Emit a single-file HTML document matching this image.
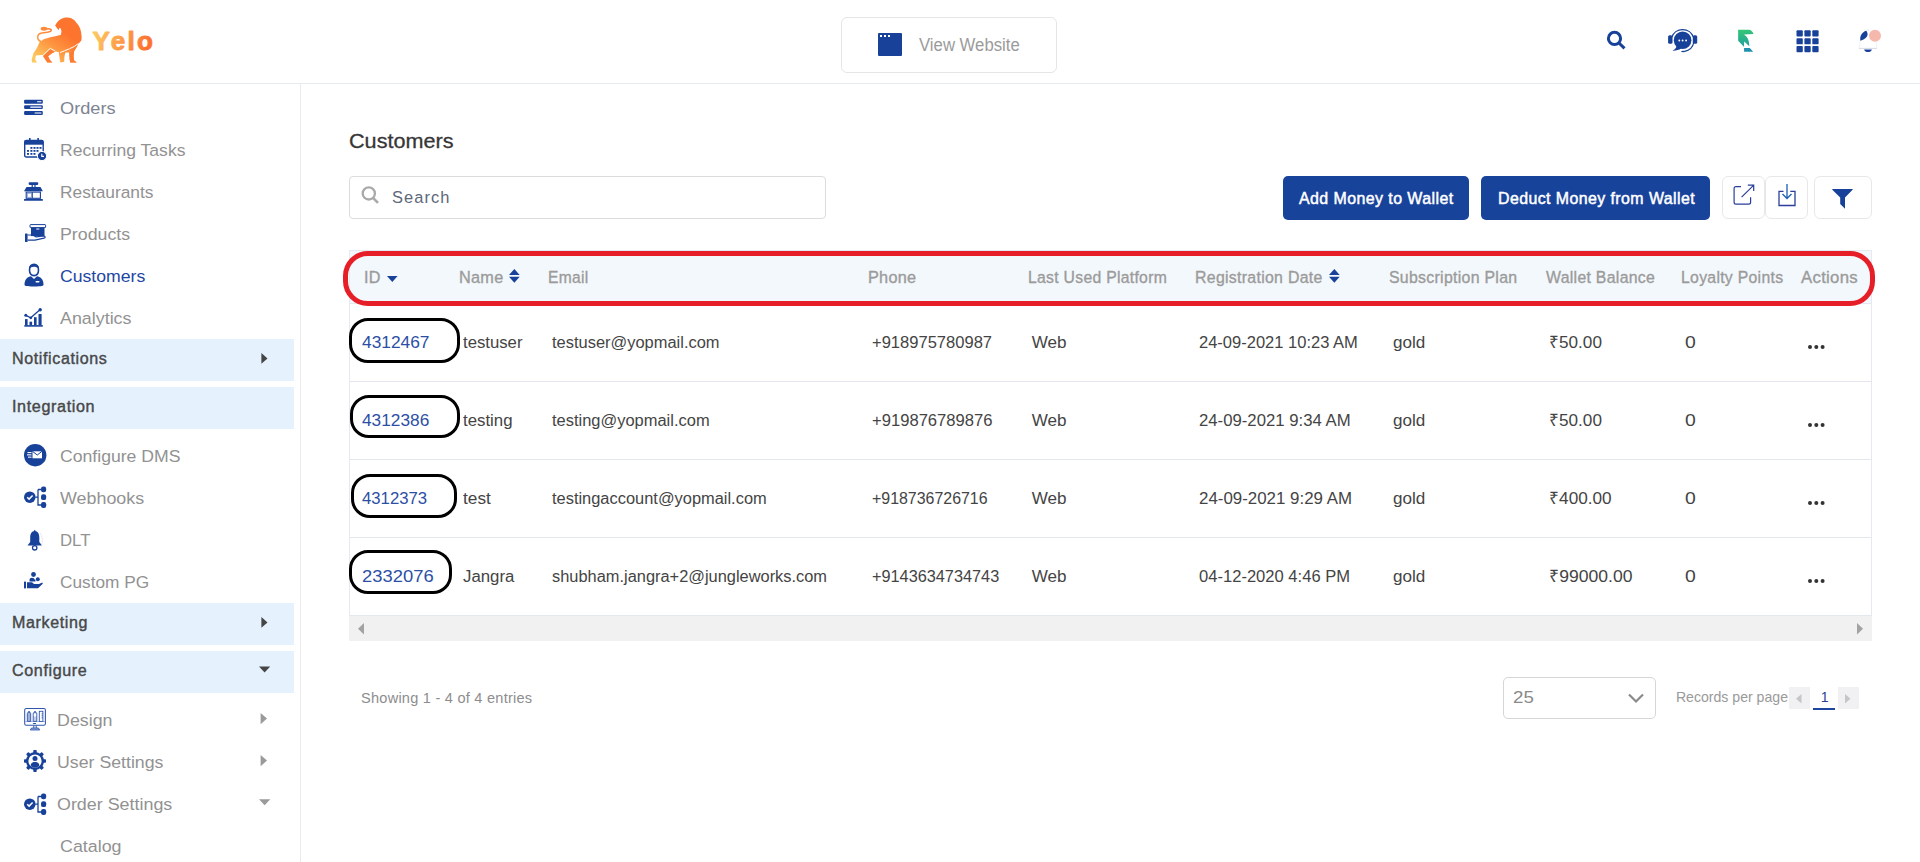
<!DOCTYPE html>
<html><head><meta charset="utf-8"><title>Customers</title><style>
*{box-sizing:border-box;margin:0;padding:0}
html,body{width:1920px;height:862px;overflow:hidden;background:#fff;font-family:"Liberation Sans",sans-serif}
body{position:relative}
.a{position:absolute;white-space:nowrap;line-height:1}
.b{position:absolute}
svg{position:absolute;overflow:visible}
</style></head><body>
<div class="b" style="left:0;top:83px;width:1920px;height:1px;background:#e7eaf2"></div>
<div class="b" style="left:300px;top:84px;width:1px;height:778px;background:#ebebeb"></div>
<svg style="left:0;top:0" width="1" height="1"><defs>
<linearGradient id="lg1" x1="0" y1="1" x2="0.6" y2="0.2"><stop offset="0" stop-color="#fdc15c"/><stop offset="1" stop-color="#fd7a2e"/></linearGradient>
<linearGradient id="lg2" x1="0" y1="0" x2="1" y2="0.2"><stop offset="0.1" stop-color="#fdc65f"/><stop offset="1" stop-color="#fd7130"/></linearGradient>
<linearGradient id="lg3" x1="0" y1="0" x2="0.1" y2="1"><stop offset="0" stop-color="#34c972"/><stop offset="1" stop-color="#22a0a0"/></linearGradient>
</defs></svg><svg style="left:28px;top:14px" width="60" height="52" viewBox="0 0 995 862">
<defs><linearGradient id="lgl" gradientUnits="userSpaceOnUse" x1="250" y1="800" x2="600" y2="300"><stop offset="0" stop-color="#fdc85e"/><stop offset="0.55" stop-color="#fd9440"/><stop offset="1" stop-color="#fd742e"/></linearGradient></defs>
<path fill="url(#lgl)" d="M450 190 C470 150 500 110 540 85 C590 55 660 45 720 70 L770 105 L800 140 L840 190 L865 240 L880 300 L890 380 L885 440 L860 470 L835 495 L800 560 L765 615 L755 700 L765 770 L810 805 L700 805 L690 740 L680 640 L620 640 L605 700 L600 790 L535 805 L520 700 L510 630 L460 620 L390 650 L330 700 L360 760 L405 805 L320 805 L255 705 L240 680 L130 690 L120 760 L150 805 L70 805 L60 760 L90 650 L150 560 L190 470 L260 420 L370 385 L470 365 L545 345 L555 290 L545 240 L520 230 L505 270 L480 230 Z"/>
<path fill="none" stroke="url(#lgl)" stroke-width="26" stroke-linecap="round" d="M215 455 C140 430 140 330 230 315 C300 300 380 305 385 270 C390 245 340 240 310 250"/>
<ellipse cx="265" cy="245" rx="55" ry="32" fill="#fd8a3c"/>
<path fill="#fd7c35" d="M250 700 L370 585 L450 625 L395 655 L335 700 L362 760 L405 805 L320 805 Z"/>
<path fill="#fd7a33" d="M690 650 L835 500 L800 560 L765 615 L755 700 L765 770 L810 805 L700 805 L690 740 Z"/>
<path fill="none" stroke="#fff" stroke-width="16" d="M240 690 L370 570 L450 615 M530 640 C620 600 760 560 835 490"/>
</svg><svg style="left:90px;top:23px" width="66" height="30" viewBox="0 0 66 30"><text x="2.6" y="27.1" font-family="Liberation Sans" font-weight="bold" font-size="26" fill="url(#lg2)" stroke="url(#lg2)" stroke-width="0.9" stroke-linejoin="round" textLength="60.4" lengthAdjust="spacing">Yelo</text></svg><div class="b" style="left:841px;top:17px;width:216px;height:56px;border:1px solid #e5e5e5;border-radius:6px"></div>
<div class="b" style="left:877.5px;top:32.5px;width:24px;height:23.5px;background:#18419a;border-radius:1px"></div>
<div class="b" style="left:879.5px;top:34.5px;width:2px;height:2px;background:#fff"></div>
<div class="b" style="left:883.5px;top:34.5px;width:2px;height:2px;background:#fff"></div>
<div class="b" style="left:887.5px;top:34.5px;width:2px;height:2px;background:#fff"></div>
<div class="a" style="left:918.75px;top:36.00px;font-size:18.00px;color:#9b9b9b;transform:scaleX(0.9298);transform-origin:0 0;">View Website</div>
<svg style="left:1600px;top:24px" width="30" height="30" viewBox="0 0 30 30"><circle cx="14.5" cy="14.4" r="6.1" fill="none" stroke="#18419a" stroke-width="3"/><path d="M19 19 L24.5 24.3" stroke="#18419a" stroke-width="3" fill="none"/></svg><svg style="left:1664px;top:25px" width="36" height="32" viewBox="0 0 36 32">
<path d="M7.6 12.5 A11.6 11.6 0 0 1 29.6 12.5" fill="none" stroke="#18419a" stroke-width="1.25"/>
<path d="M29.9 17 A11.7 11.7 0 0 1 20.5 26.4" fill="none" stroke="#18419a" stroke-width="1.25"/>
<rect x="4.1" y="10.2" width="4.4" height="8.6" rx="1.6" fill="#18419a"/>
<rect x="28.8" y="10.2" width="4.4" height="8.6" rx="1.6" fill="#18419a"/>
<circle cx="18.6" cy="15.3" r="8.8" fill="#18419a"/>
<path d="M12.6 20.5 C12.4 23 11 24.6 8.4 25.6 C11.8 25.8 14.8 24.9 17.2 23.4 Z" fill="#18419a"/>
<ellipse cx="19.2" cy="26.5" rx="2.1" ry="0.8" fill="#18419a"/>
<circle cx="15.3" cy="15.5" r="0.95" fill="#fff"/><circle cx="18.6" cy="15.5" r="0.95" fill="#fff"/><circle cx="22.1" cy="15.5" r="0.95" fill="#fff"/>
</svg><svg style="left:1737px;top:29px" width="18" height="24" viewBox="0 0 18 24">
<path fill="url(#lg3)" d="M1.13 0.76 L11.7 0.76 C14 0.9 15.6 2.4 16.5 5 L6.9 5.4 C9.5 7 12.4 10 12.3 17.3 L7.25 12.45 L6.9 17.8 L1.13 11.7 Z"/>
<path fill="#2190b0" d="M7.07 19 L12.8 19 L16.2 22.7 L7.07 22.7 Z"/>
</svg><svg style="left:1797px;top:30px" width="22" height="22" viewBox="0 0 22 22"><rect x="-0.50" y="0.30" width="6.3" height="6.1" rx="0.9" fill="#18419a"/><rect x="7.40" y="0.30" width="6.3" height="6.1" rx="0.9" fill="#18419a"/><rect x="15.30" y="0.30" width="6.3" height="6.1" rx="0.9" fill="#18419a"/><rect x="-0.50" y="8.20" width="6.3" height="6.1" rx="0.9" fill="#18419a"/><rect x="7.40" y="8.20" width="6.3" height="6.1" rx="0.9" fill="#18419a"/><rect x="15.30" y="8.20" width="6.3" height="6.1" rx="0.9" fill="#18419a"/><rect x="-0.50" y="16.10" width="6.3" height="6.1" rx="0.9" fill="#18419a"/><rect x="7.40" y="16.10" width="6.3" height="6.1" rx="0.9" fill="#18419a"/><rect x="15.30" y="16.10" width="6.3" height="6.1" rx="0.9" fill="#18419a"/></svg>
<svg style="left:1856px;top:28px" width="28" height="26" viewBox="0 0 28 26">
<path d="M4.3 12.8 C3.6 8 6 4 10.2 2.8 C12.6 5.5 12.5 10.5 4.3 12.8 Z" fill="#18419a"/>
<path d="M10.3 2.3 Q12 1.8 13.4 2.4" fill="none" stroke="#d5d8e0" stroke-width="0.6"/>
<path d="M4.3 13 L3.1 20.1 M19.9 13.3 L20.8 20.1" fill="none" stroke="#e6e8f2" stroke-width="0.6"/>
<path d="M2.9 20.4 L20.9 20.4" stroke="#d8dbe6" stroke-width="1.1"/>
<path d="M8.1 21.4 L15.9 21.4 C15.3 23.2 13.8 24 12 24 C10.2 24 8.7 23.2 8.1 21.4 Z" fill="#18419a"/>
<circle cx="19" cy="7.8" r="6" fill="#f5b8ad"/>
</svg><div class="a" style="left:59.85px;top:100.00px;font-size:17.40px;color:#7e8493;transform:scaleX(1.0445);transform-origin:0 0;">Orders</div>
<div class="a" style="left:59.85px;top:142.00px;font-size:17.40px;color:#929292;transform:scaleX(1.0085);transform-origin:0 0;">Recurring Tasks</div>
<div class="a" style="left:59.85px;top:184.00px;font-size:17.40px;color:#929292;transform:scaleX(0.9967);transform-origin:0 0;">Restaurants</div>
<div class="a" style="left:59.85px;top:226.00px;font-size:17.40px;color:#929292;transform:scaleX(1.0216);transform-origin:0 0;">Products</div>
<div class="a" style="left:59.85px;top:268.00px;font-size:17.40px;color:#1e47a3;transform:scaleX(1.0145);transform-origin:0 0;">Customers</div>
<div class="a" style="left:59.85px;top:310.00px;font-size:17.40px;color:#929292;transform:scaleX(1.0271);transform-origin:0 0;">Analytics</div>
<div class="a" style="left:59.85px;top:448.00px;font-size:17.40px;color:#929292;transform:scaleX(1.0132);transform-origin:0 0;">Configure DMS</div>
<div class="a" style="left:59.85px;top:490.00px;font-size:17.40px;color:#929292;transform:scaleX(1.0286);transform-origin:0 0;">Webhooks</div>
<div class="a" style="left:59.85px;top:532.00px;font-size:17.40px;color:#929292;transform:scaleX(0.9635);transform-origin:0 0;">DLT</div>
<div class="a" style="left:59.85px;top:574.00px;font-size:17.40px;color:#929292;transform:scaleX(0.9910);transform-origin:0 0;">Custom PG</div>
<div class="a" style="left:57.35px;top:712.00px;font-size:17.40px;color:#929292;transform:scaleX(1.0256);transform-origin:0 0;">Design</div>
<div class="a" style="left:57.35px;top:754.00px;font-size:17.40px;color:#929292;transform:scaleX(1.0199);transform-origin:0 0;">User Settings</div>
<div class="a" style="left:57.35px;top:796.00px;font-size:17.40px;color:#929292;transform:scaleX(1.0280);transform-origin:0 0;">Order Settings</div>
<div class="a" style="left:59.75px;top:838.00px;font-size:17.40px;color:#929292;transform:scaleX(1.0256);transform-origin:0 0;">Catalog</div>
<div class="b" style="left:0;top:339px;width:294px;height:41.5px;background:#e5f2fe"></div>
<div class="a" style="left:12.05px;top:351.00px;font-size:15.80px;color:#484848;transform:scaleX(1.0169);transform-origin:0 0;letter-spacing:0.60px;-webkit-text-stroke:0.4px #484848;">Notifications</div>
<svg style="left:260.5px;top:353px" width="8" height="12" viewBox="0 0 8 12"><path d="M0.4 0 L6.5 5.4 L0.4 10.8 Z" fill="#454545"/></svg>
<div class="b" style="left:0;top:387px;width:294px;height:41.7px;background:#e5f2fe"></div>
<div class="a" style="left:12.05px;top:399.00px;font-size:15.80px;color:#484848;transform:scaleX(1.0234);transform-origin:0 0;letter-spacing:0.60px;-webkit-text-stroke:0.4px #484848;">Integration</div>
<div class="b" style="left:0;top:602.8px;width:294px;height:42.2px;background:#e5f2fe"></div>
<div class="a" style="left:12.05px;top:615.00px;font-size:15.80px;color:#484848;transform:scaleX(1.0186);transform-origin:0 0;letter-spacing:0.60px;-webkit-text-stroke:0.4px #484848;">Marketing</div>
<svg style="left:260.5px;top:617px" width="8" height="12" viewBox="0 0 8 12"><path d="M0.4 0 L6.5 5.4 L0.4 10.8 Z" fill="#454545"/></svg>
<div class="b" style="left:0;top:651px;width:294px;height:41.8px;background:#e5f2fe"></div>
<div class="a" style="left:12.05px;top:663.00px;font-size:15.80px;color:#484848;transform:scaleX(1.0209);transform-origin:0 0;letter-spacing:0.60px;-webkit-text-stroke:0.4px #484848;">Configure</div>
<svg style="left:259px;top:666px" width="12" height="8" viewBox="0 0 12 8"><path d="M0 0.6 L11.2 0.6 L5.6 6.6 Z" fill="#454545"/></svg>
<svg style="left:260px;top:713px" width="8" height="12" viewBox="0 0 8 12"><path d="M0.6 0 L7 5.6 L0.6 11.2 Z" fill="#9a9a9a"/></svg>
<svg style="left:260px;top:755px" width="8" height="12" viewBox="0 0 8 12"><path d="M0.6 0 L7 5.6 L0.6 11.2 Z" fill="#9a9a9a"/></svg>
<svg style="left:259px;top:799px" width="12" height="8" viewBox="0 0 12 8"><path d="M0 0.3 L11.3 0.3 L5.65 6.2 Z" fill="#9a9a9a"/></svg>
<svg style="left:24px;top:99px" width="20" height="17" viewBox="0 0 20 17"><rect x="0.1" y="0.8" width="18.7" height="3.9" rx="1" fill="#18419a"/><rect x="0.1" y="6.2" width="18.7" height="3.9" rx="1" fill="#18419a"/><rect x="0.1" y="12" width="18.7" height="3.9" rx="1" fill="#18419a"/><rect x="13" y="2.2" width="4.6" height="1.1" rx="0.55" fill="#fff"/><rect x="6.2" y="7.6" width="11.4" height="1.1" rx="0.55" fill="#fff"/><rect x="10.5" y="13.4" width="7.1" height="1.2" rx="0.6" fill="#fff"/></svg>
<svg style="left:24px;top:138px" width="23" height="23" viewBox="0 0 23 23"><rect x="0.7" y="2.5" width="18.5" height="16.5" rx="1.6" fill="none" stroke="#18419a" stroke-width="1.4"/><rect x="0.7" y="2.5" width="18.5" height="4.2" fill="#18419a"/><rect x="5" y="0" width="1.6" height="3.5" fill="#18419a"/><rect x="13.3" y="0" width="1.6" height="3.5" fill="#18419a"/><rect x="6.4" y="9" width="2" height="1.8" fill="#18419a"/><rect x="9.5" y="9" width="2" height="1.8" fill="#18419a"/><rect x="12.5" y="9" width="2" height="1.8" fill="#18419a"/><rect x="15.5" y="9" width="2" height="1.8" fill="#18419a"/><rect x="3" y="12" width="2" height="1.8" fill="#18419a"/><rect x="6.4" y="12" width="2" height="1.8" fill="#18419a"/><rect x="9.5" y="12" width="2" height="1.8" fill="#18419a"/><rect x="12.5" y="12" width="2" height="1.8" fill="#18419a"/><rect x="3" y="15" width="2" height="1.8" fill="#18419a"/><rect x="6.4" y="15" width="2" height="1.8" fill="#18419a"/><rect x="9.5" y="15" width="2" height="1.8" fill="#18419a"/><circle cx="18" cy="18" r="4.6" fill="#18419a" stroke="#fff" stroke-width="1"/><path d="M17.8 15.8 L17.8 18.4 L20 18.4" stroke="#fff" stroke-width="1.1" fill="none"/></svg>
<svg style="left:24px;top:182px" width="19" height="19" viewBox="0 0 19 19"><rect x="4.7" y="0.2" width="9.5" height="2.7" rx="0.8" fill="#18419a"/><path d="M8.2 2.9 L8.2 5 M11 2.9 L11 5" stroke="#18419a" stroke-width="1.2"/><path d="M2.5 5 L16.5 5 L18.9 9.2 L0 9.2 Z" fill="#18419a"/><rect x="2.2" y="10.1" width="14.2" height="6.2" fill="none" stroke="#18419a" stroke-width="1.1"/><rect x="3.3" y="11.2" width="4" height="4" fill="none" stroke="#6b86c8" stroke-width="0.6"/><rect x="7.8" y="10.1" width="1" height="6.2" fill="#18419a"/><rect x="0" y="16.9" width="18.9" height="1.9" rx="0.6" fill="#18419a"/></svg>
<svg style="left:25px;top:224px" width="21" height="18" viewBox="0 0 21 18"><rect x="5" y="0.6" width="15.6" height="3" rx="0.6" fill="none" stroke="#18419a" stroke-width="1"/><rect x="6" y="3.6" width="13.5" height="8.5" fill="#18419a"/><rect x="11.3" y="4.5" width="3" height="1" fill="#fff"/><rect x="0" y="9.5" width="2.6" height="8.5" rx="0.6" fill="#18419a"/><path d="M2.6 11 L8 11 L11 12.8 L19 12 C20.5 12 20.5 14 19 14.2 L10 16.2 L2.6 16.2" fill="none" stroke="#18419a" stroke-width="1.2"/></svg>
<svg style="left:23.5px;top:264px" width="20" height="23" viewBox="0 0 20 23"><path d="M5.5 6 C5.5 2 7.5 0.3 10 0.3 C12.6 0.3 14.5 2 14.5 6 C14.5 9.6 12.6 11.6 10 11.6 C7.4 11.6 5.5 9.6 5.5 6 Z" fill="none" stroke="#18419a" stroke-width="1.6"/><path d="M5.5 4.8 C7 2.3 12 2 14.5 4.8 L14.5 2.6 C12.7 0 7.3 0 5.5 2.6 Z" fill="#18419a"/><path d="M0.5 20.5 C0.5 15 4 12.8 7 12.3 L10 15 L13 12.3 C16 12.8 19.5 15 19.5 20.5 C19.5 22 18 22.4 10 22.4 C2 22.4 0.5 22 0.5 20.5 Z" fill="#18419a"/><rect x="11.5" y="17" width="4" height="1.5" rx="0.7" fill="#fff"/></svg>
<svg style="left:24px;top:308px" width="20" height="20" viewBox="0 0 20 20"><rect x="0.3" y="17.1" width="18.5" height="1.6" fill="#18419a"/><rect x="1" y="11.1" width="2.6" height="6.1" fill="#18419a"/><rect x="5.5" y="13.7" width="2.6" height="3.5" fill="#18419a"/><rect x="10" y="9.2" width="2.6" height="8" fill="#18419a"/><rect x="14.5" y="6" width="3.1" height="11.2" fill="#18419a"/><path d="M1.8 7.3 L6.8 9.8 L11 6 L16 1.8" fill="none" stroke="#18419a" stroke-width="1.3"/><circle cx="16.2" cy="1.7" r="1.7" fill="#18419a"/><circle cx="1.8" cy="7.3" r="1.5" fill="#18419a"/><circle cx="6.8" cy="9.8" r="1.4" fill="#18419a"/></svg>
<svg style="left:24px;top:444px" width="23" height="23" viewBox="0 0 23 23"><circle cx="11.2" cy="11.2" r="11.2" fill="#18419a"/><rect x="8.5" y="7.3" width="9.5" height="7" fill="#fff"/><path d="M8.5 7.3 L13.25 11 L18 7.3" fill="none" stroke="#18419a" stroke-width="1"/><rect x="3.5" y="8" width="4" height="1.1" fill="#fff"/><rect x="3" y="10.3" width="4.5" height="1.1" fill="#fff"/><rect x="4" y="12.6" width="3.5" height="1.1" fill="#fff"/></svg>
<svg style="left:24px;top:486px" width="23" height="23" viewBox="0 0 23 23"><circle cx="5.8" cy="11.2" r="5.8" fill="#18419a"/><path d="M3.2 11.2 L5.1 13.1 L8.6 9.4" fill="none" stroke="#fff" stroke-width="1.5"/><path d="M11.5 11.2 L14 11.2 M14 3.5 L14 19 L18 19 M14 3.5 L18 3.5" fill="none" stroke="#18419a" stroke-width="1.3"/><rect x="17" y="0.5" width="5.2" height="5.8" rx="2.2" fill="#18419a"/><rect x="17" y="8.3" width="5.2" height="5.8" rx="2.2" fill="#18419a"/><rect x="17" y="16.1" width="5.2" height="5.8" rx="2.2" fill="#18419a"/></svg>
<svg style="left:23.8px;top:792.5px" width="23" height="23" viewBox="0 0 23 23"><circle cx="5.8" cy="11.2" r="5.8" fill="#18419a"/><path d="M3.2 11.2 L5.1 13.1 L8.6 9.4" fill="none" stroke="#fff" stroke-width="1.5"/><path d="M11.5 11.2 L14 11.2 M14 3.5 L14 19 L18 19 M14 3.5 L18 3.5" fill="none" stroke="#18419a" stroke-width="1.3"/><rect x="17" y="0.5" width="5.2" height="5.8" rx="2.2" fill="#18419a"/><rect x="17" y="8.3" width="5.2" height="5.8" rx="2.2" fill="#18419a"/><rect x="17" y="16.1" width="5.2" height="5.8" rx="2.2" fill="#18419a"/></svg>
<svg style="left:26px;top:530px" width="18" height="21" viewBox="0 0 18 21"><path d="M8.7 1 C5.5 1 4.2 4 4.2 7.5 L4.2 12 L1.5 15.5 L16 15.5 L13.3 12 L13.3 7.5 C13.3 4 12 1 8.7 1 Z" fill="#18419a"/><rect x="8.2" y="0" width="1.1" height="2" fill="#18419a"/><circle cx="8.7" cy="17.8" r="2.2" fill="none" stroke="#18419a" stroke-width="1.3"/><path d="M14 3 C16.5 6 17 12 15.5 16" fill="none" stroke="#c9d3ea" stroke-width="0.5"/></svg>
<svg style="left:24px;top:572px" width="19" height="17" viewBox="0 0 19 17"><circle cx="9.5" cy="2.5" r="2.4" fill="#18419a"/><circle cx="13.8" cy="7.3" r="2" fill="#18419a"/><path d="M5.5 8 C5.5 5.8 8 5 9.8 6.3 L11.5 8.5 L11.5 9.6 L5.5 9.6 Z" fill="#18419a"/><rect x="0" y="9.6" width="2" height="6.8" fill="#18419a"/><path d="M3 10.3 L8 10.3 L10 12 L15 12 L18.3 10.5 L18.8 11.8 L14 16.2 L3 16.2 Z" fill="#18419a"/></svg>
<svg style="left:20px;top:704px" width="30" height="30" viewBox="0 0 30 30"><rect x="4.7" y="4.5" width="20.7" height="16.8" rx="1.6" fill="none" stroke="#2f55ad" stroke-width="1.05"/><path d="M5 17.5 L25 17.5" stroke="#a9b9e0" stroke-width="0.9"/><path d="M7.3 17.4 L7.3 10 C7.3 9 8 8.3 9 7.5 C10 8.3 10.7 9 10.7 10 L10.7 17.4 Z" fill="#9fb1dd" stroke="#2f55ad" stroke-width="0.9"/><rect x="8.3" y="7.3" width="1.5" height="1.4" fill="#2f55ad"/><path d="M13.2 17.4 L13.2 10 C13.2 8.8 14 8 15 8 C16 8 16.8 8.8 16.8 10 L16.8 17.4 Z" fill="#c5d0ec" stroke="#2f55ad" stroke-width="0.9"/><ellipse cx="15" cy="11" rx="1.3" ry="1.5" fill="#fff"/><rect x="14.2" y="7.3" width="1.6" height="1.3" fill="#2f55ad"/><rect x="19.3" y="7.3" width="3.6" height="10.1" fill="#fff" stroke="#2f55ad" stroke-width="0.9"/><rect x="21.6" y="9.4" width="1.2" height="0.9" fill="#2f55ad"/><rect x="21.6" y="11.4" width="1.2" height="0.9" fill="#2f55ad"/><rect x="21.6" y="13.4" width="1.2" height="0.9" fill="#2f55ad"/><rect x="12.9" y="18.9" width="3.2" height="1" rx="0.5" fill="#2f55ad"/><path d="M13.8 21.6 L13.8 24 M16.2 21.6 L16.2 24" stroke="#2f55ad" stroke-width="1"/><path d="M10.3 26 L11.5 24 L18.5 24 L19.7 26 Z" fill="#8aa0d6" stroke="#2f55ad" stroke-width="0.8"/></svg>
<svg style="left:23.8px;top:750px" width="22" height="22" viewBox="0 0 22 22"><rect x="9.3" y="0" width="3.4" height="4" rx="0.8" fill="#18419a" transform="rotate(0 11 11)"/><rect x="9.3" y="0" width="3.4" height="4" rx="0.8" fill="#18419a" transform="rotate(45 11 11)"/><rect x="9.3" y="0" width="3.4" height="4" rx="0.8" fill="#18419a" transform="rotate(90 11 11)"/><rect x="9.3" y="0" width="3.4" height="4" rx="0.8" fill="#18419a" transform="rotate(135 11 11)"/><rect x="9.3" y="0" width="3.4" height="4" rx="0.8" fill="#18419a" transform="rotate(180 11 11)"/><rect x="9.3" y="0" width="3.4" height="4" rx="0.8" fill="#18419a" transform="rotate(225 11 11)"/><rect x="9.3" y="0" width="3.4" height="4" rx="0.8" fill="#18419a" transform="rotate(270 11 11)"/><rect x="9.3" y="0" width="3.4" height="4" rx="0.8" fill="#18419a" transform="rotate(315 11 11)"/><circle cx="11" cy="11" r="9" fill="#18419a"/><circle cx="11" cy="11" r="6.6" fill="#fff"/><circle cx="11" cy="8.6" r="2.5" fill="#18419a"/><path d="M6.6 15.4 C7 12.8 8.8 12 11 12 C13.2 12 15 12.8 15.4 15.4 C14.2 16.8 12.7 17.4 11 17.4 C9.3 17.4 7.8 16.8 6.6 15.4 Z" fill="#18419a"/></svg>
<div class="a" style="left:349.15px;top:130.00px;font-size:21.10px;color:#363636;transform:scaleX(1.0249);transform-origin:0 0;-webkit-text-stroke:0.3px #363636;">Customers</div>
<div class="b" style="left:349px;top:176px;width:477px;height:43px;border:1px solid #dcdcdc;border-radius:4px"></div>
<svg style="left:361px;top:186px" width="19" height="19" viewBox="0 0 19 19"><circle cx="7.8" cy="7.4" r="6.1" fill="none" stroke="#a9a9a9" stroke-width="2.3"/><path d="M12 11.8 L17 16.8" stroke="#a9a9a9" stroke-width="2.6"/></svg>
<div class="a" style="left:392.15px;top:189.00px;font-size:17.20px;color:#5d687a;transform:scaleX(0.9573);transform-origin:0 0;letter-spacing:1.10px;">Search</div>
<div class="b" style="left:1283px;top:176px;width:186px;height:44px;background:#18439b;border-radius:5px"></div>
<div class="a" style="left:1299.15px;top:191.00px;font-size:16.60px;color:#ffffff;transform:scaleX(0.9598);transform-origin:0 0;letter-spacing:0.45px;-webkit-text-stroke:0.5px #fff;">Add Money to Wallet</div>
<div class="b" style="left:1481px;top:176px;width:229px;height:44px;background:#18439b;border-radius:5px"></div>
<div class="a" style="left:1497.65px;top:191.00px;font-size:16.60px;color:#ffffff;transform:scaleX(0.9580);transform-origin:0 0;letter-spacing:0.45px;-webkit-text-stroke:0.5px #fff;">Deduct Money from Wallet</div>
<div class="b" style="left:1722px;top:176px;width:42.5px;height:43px;border:1px solid #e8e8e8;border-radius:6px"></div>
<div class="b" style="left:1765px;top:176px;width:42.5px;height:43px;border:1px solid #e8e8e8;border-radius:6px"></div>
<div class="b" style="left:1814px;top:176px;width:58px;height:43px;border:1px solid #e8e8e8;border-radius:6px"></div>
<svg style="left:1733px;top:184px" width="22" height="22" viewBox="0 0 22 22"><path d="M8 2.6 L3 2.6 Q1.1 2.6 1.1 4.5 L1.1 18.2 Q1.1 20.1 3 20.1 L15.7 20.1 Q17.6 20.1 17.6 18.2 L17.6 13.2" fill="none" stroke="#2a3f9a" stroke-width="1.2"/><path d="M8.6 13.2 L20.5 1.3 M14.8 1.1 L20.7 1.1 L20.7 7" fill="none" stroke="#2a3f9a" stroke-width="1.2"/></svg>
<svg style="left:1778px;top:184px" width="19" height="23" viewBox="0 0 19 23"><path d="M5.5 7.3 L1 7.3 L1 21.5 L17 21.5 L17 7.3 L12.3 7.3" fill="none" stroke="#2a3f9a" stroke-width="1.3"/><path d="M9 0 L9 14 M4.5 10 L9 14.5 L13.5 10" fill="none" stroke="#1a5fb4" stroke-width="1.3"/></svg>
<svg style="left:1832px;top:189px" width="22" height="21" viewBox="0 0 22 21"><path d="M0.3 0 L20.6 0 L20.6 0.8 L13 8.5 L13 19.8 L8.2 15 L8.2 8.5 L0.3 0.8 Z" fill="#18419a"/></svg>
<div class="b" style="left:349px;top:250px;width:1px;height:366px;background:#e6eaf0"></div>
<div class="b" style="left:1871px;top:250px;width:1px;height:366px;background:#e6eaf0"></div>
<div class="b" style="left:349px;top:250px;width:1523px;height:1px;background:#e6eaf0"></div>
<div class="b" style="left:350px;top:251px;width:1521px;height:52px;background:#f3f8fc"></div>
<div class="b" style="left:350px;top:303px;width:1521px;height:1px;background:#e4e8ee"></div>
<div class="b" style="left:350px;top:381px;width:1521px;height:1px;background:#e4e8ee"></div>
<div class="b" style="left:350px;top:459px;width:1521px;height:1px;background:#e4e8ee"></div>
<div class="b" style="left:350px;top:537px;width:1521px;height:1px;background:#e4e8ee"></div>
<div class="b" style="left:350px;top:615px;width:1521px;height:1px;background:#e4e8ee"></div>
<div class="a" style="left:364.15px;top:269.00px;font-size:16.30px;color:#9b9b9b;transform:scaleX(0.9934);transform-origin:0 0;letter-spacing:0.30px;-webkit-text-stroke:0.35px #9b9b9b;">ID</div>
<div class="a" style="left:458.90px;top:269.00px;font-size:16.30px;color:#9b9b9b;letter-spacing:0.30px;-webkit-text-stroke:0.35px #9b9b9b;">Name</div>
<div class="a" style="left:547.90px;top:269.00px;font-size:16.30px;color:#9b9b9b;transform:scaleX(0.9580);transform-origin:0 0;letter-spacing:0.30px;-webkit-text-stroke:0.35px #9b9b9b;">Email</div>
<div class="a" style="left:867.90px;top:269.00px;font-size:16.30px;color:#9b9b9b;letter-spacing:0.30px;-webkit-text-stroke:0.35px #9b9b9b;">Phone</div>
<div class="a" style="left:1027.90px;top:269.00px;font-size:16.30px;color:#9b9b9b;transform:scaleX(0.9669);transform-origin:0 0;letter-spacing:0.30px;-webkit-text-stroke:0.35px #9b9b9b;">Last Used Platform</div>
<div class="a" style="left:1195.40px;top:269.00px;font-size:16.30px;color:#9b9b9b;transform:scaleX(0.9749);transform-origin:0 0;letter-spacing:0.30px;-webkit-text-stroke:0.35px #9b9b9b;">Registration Date</div>
<div class="a" style="left:1389.05px;top:269.00px;font-size:16.30px;color:#9b9b9b;transform:scaleX(0.9743);transform-origin:0 0;letter-spacing:0.30px;-webkit-text-stroke:0.35px #9b9b9b;">Subscription Plan</div>
<div class="a" style="left:1545.85px;top:269.00px;font-size:16.30px;color:#9b9b9b;transform:scaleX(0.9729);transform-origin:0 0;letter-spacing:0.30px;-webkit-text-stroke:0.35px #9b9b9b;">Wallet Balance</div>
<div class="a" style="left:1680.75px;top:269.00px;font-size:16.30px;color:#9b9b9b;transform:scaleX(0.9692);transform-origin:0 0;letter-spacing:0.30px;-webkit-text-stroke:0.35px #9b9b9b;">Loyalty Points</div>
<div class="a" style="left:1800.55px;top:269.00px;font-size:16.30px;color:#9b9b9b;transform:scaleX(1.0270);transform-origin:0 0;letter-spacing:0.30px;-webkit-text-stroke:0.35px #9b9b9b;">Actions</div>
<svg style="left:386.5px;top:276px" width="11" height="7" viewBox="0 0 11 7"><path d="M0 0 L10.6 0 L5.3 6 Z" fill="#18419a"/></svg>
<svg style="left:509px;top:268.7px" width="11" height="14" viewBox="0 0 11 14"><path d="M0 6 L10.7 6 L5.35 0 Z M0 7.8 L10.7 7.8 L5.35 13.8 Z" fill="#18419a"/></svg>
<svg style="left:1328.8px;top:268.7px" width="11" height="14" viewBox="0 0 11 14"><path d="M0 6 L10.7 6 L5.35 0 Z M0 7.8 L10.7 7.8 L5.35 13.8 Z" fill="#18419a"/></svg>
<div class="b" style="left:343px;top:251px;width:1532px;height:55px;border:5px solid #e61e27;border-radius:25px"></div>
<div class="a" style="left:362.15px;top:334.00px;font-size:17.08px;color:#2c4fa5;transform:scaleX(1.0146);transform-origin:0 0;">4312467</div>
<div class="a" style="left:462.90px;top:334.00px;font-size:17.08px;color:#444444;transform:scaleX(0.9791);transform-origin:0 0;">testuser</div>
<div class="a" style="left:551.65px;top:334.00px;font-size:17.08px;color:#444444;transform:scaleX(0.9633);transform-origin:0 0;">testuser@yopmail.com</div>
<div class="a" style="left:871.65px;top:334.00px;font-size:17.08px;color:#444444;transform:scaleX(0.9686);transform-origin:0 0;">+918975780987</div>
<div class="a" style="left:1031.65px;top:334.00px;font-size:17.08px;color:#444444;">Web</div>
<div class="a" style="left:1199.15px;top:334.00px;font-size:17.08px;color:#444444;transform:scaleX(0.9666);transform-origin:0 0;">24-09-2021 10:23 AM</div>
<div class="a" style="left:1392.90px;top:334.00px;font-size:17.08px;color:#444444;">gold</div>
<div class="a" style="left:1548.65px;top:334.00px;font-size:17.08px;color:#444444;transform:scaleX(1.0037);transform-origin:0 0;">₹50.00</div>
<div class="a" style="left:1685.15px;top:334.00px;font-size:17.08px;color:#444444;transform:scaleX(1.1341);transform-origin:0 0;">0</div>
<svg style="left:1808px;top:345px" width="18" height="5" viewBox="0 0 18 5"><circle cx="2" cy="2" r="2" fill="#333"/><circle cx="8.3" cy="2" r="2" fill="#333"/><circle cx="14.6" cy="2" r="2" fill="#333"/></svg>
<div class="b" style="left:349px;top:318px;width:111px;height:44.5px;border:3px solid #000;border-radius:19px"></div>
<div class="a" style="left:362.15px;top:412.00px;font-size:17.08px;color:#2c4fa5;transform:scaleX(1.0115);transform-origin:0 0;">4312386</div>
<div class="a" style="left:462.90px;top:412.00px;font-size:17.08px;color:#444444;transform:scaleX(0.9843);transform-origin:0 0;">testing</div>
<div class="a" style="left:551.65px;top:412.00px;font-size:17.08px;color:#444444;transform:scaleX(0.9638);transform-origin:0 0;">testing@yopmail.com</div>
<div class="a" style="left:871.65px;top:412.00px;font-size:17.08px;color:#444444;transform:scaleX(0.9723);transform-origin:0 0;">+919876789876</div>
<div class="a" style="left:1031.65px;top:412.00px;font-size:17.08px;color:#444444;">Web</div>
<div class="a" style="left:1199.15px;top:412.00px;font-size:17.08px;color:#444444;transform:scaleX(0.9795);transform-origin:0 0;">24-09-2021 9:34 AM</div>
<div class="a" style="left:1392.90px;top:412.00px;font-size:17.08px;color:#444444;">gold</div>
<div class="a" style="left:1548.65px;top:412.00px;font-size:17.08px;color:#444444;transform:scaleX(1.0037);transform-origin:0 0;">₹50.00</div>
<div class="a" style="left:1685.15px;top:412.00px;font-size:17.08px;color:#444444;transform:scaleX(1.1341);transform-origin:0 0;">0</div>
<svg style="left:1808px;top:423px" width="18" height="5" viewBox="0 0 18 5"><circle cx="2" cy="2" r="2" fill="#333"/><circle cx="8.3" cy="2" r="2" fill="#333"/><circle cx="14.6" cy="2" r="2" fill="#333"/></svg>
<div class="b" style="left:349.7px;top:395.3px;width:110.3px;height:43.2px;border:3px solid #000;border-radius:19px"></div>
<div class="a" style="left:362.15px;top:490.00px;font-size:17.08px;color:#2c4fa5;transform:scaleX(0.9792);transform-origin:0 0;">4312373</div>
<div class="a" style="left:462.90px;top:490.00px;font-size:17.08px;color:#444444;transform:scaleX(1.0100);transform-origin:0 0;">test</div>
<div class="a" style="left:551.65px;top:490.00px;font-size:17.08px;color:#444444;transform:scaleX(0.9614);transform-origin:0 0;">testingaccount@yopmail.com</div>
<div class="a" style="left:871.65px;top:490.00px;font-size:17.08px;color:#444444;transform:scaleX(0.9323);transform-origin:0 0;">+918736726716</div>
<div class="a" style="left:1031.65px;top:490.00px;font-size:17.08px;color:#444444;">Web</div>
<div class="a" style="left:1199.15px;top:490.00px;font-size:17.08px;color:#444444;transform:scaleX(0.9886);transform-origin:0 0;">24-09-2021 9:29 AM</div>
<div class="a" style="left:1392.90px;top:490.00px;font-size:17.08px;color:#444444;">gold</div>
<div class="a" style="left:1548.65px;top:490.00px;font-size:17.08px;color:#444444;transform:scaleX(1.0071);transform-origin:0 0;">₹400.00</div>
<div class="a" style="left:1685.15px;top:490.00px;font-size:17.08px;color:#444444;transform:scaleX(1.1341);transform-origin:0 0;">0</div>
<svg style="left:1808px;top:501px" width="18" height="5" viewBox="0 0 18 5"><circle cx="2" cy="2" r="2" fill="#333"/><circle cx="8.3" cy="2" r="2" fill="#333"/><circle cx="14.6" cy="2" r="2" fill="#333"/></svg>
<div class="b" style="left:350.7px;top:474px;width:106.8px;height:44px;border:3px solid #000;border-radius:19px"></div>
<div class="a" style="left:362.15px;top:568.00px;font-size:17.08px;color:#2c4fa5;transform:scaleX(1.0776);transform-origin:0 0;">2332076</div>
<div class="a" style="left:462.90px;top:568.00px;font-size:17.08px;color:#444444;transform:scaleX(0.9832);transform-origin:0 0;">Jangra</div>
<div class="a" style="left:551.65px;top:568.00px;font-size:17.08px;color:#444444;transform:scaleX(0.9600);transform-origin:0 0;">shubham.jangra+2@jungleworks.com</div>
<div class="a" style="left:871.65px;top:568.00px;font-size:17.08px;color:#444444;transform:scaleX(0.9531);transform-origin:0 0;">+9143634734743</div>
<div class="a" style="left:1031.65px;top:568.00px;font-size:17.08px;color:#444444;">Web</div>
<div class="a" style="left:1199.15px;top:568.00px;font-size:17.08px;color:#444444;transform:scaleX(0.9702);transform-origin:0 0;">04-12-2020 4:46 PM</div>
<div class="a" style="left:1392.90px;top:568.00px;font-size:17.08px;color:#444444;">gold</div>
<div class="a" style="left:1548.65px;top:568.00px;font-size:17.08px;color:#444444;transform:scaleX(1.0284);transform-origin:0 0;">₹99000.00</div>
<div class="a" style="left:1685.15px;top:568.00px;font-size:17.08px;color:#444444;transform:scaleX(1.1341);transform-origin:0 0;">0</div>
<svg style="left:1808px;top:579px" width="18" height="5" viewBox="0 0 18 5"><circle cx="2" cy="2" r="2" fill="#333"/><circle cx="8.3" cy="2" r="2" fill="#333"/><circle cx="14.6" cy="2" r="2" fill="#333"/></svg>
<div class="b" style="left:349px;top:549.6px;width:102.7px;height:44.4px;border:3px solid #000;border-radius:19px"></div>
<div class="b" style="left:349px;top:616px;width:1523px;height:25px;background:#f1f1f1"></div>
<svg style="left:358px;top:622.5px" width="7" height="12" viewBox="0 0 7 12"><path d="M6 0 L0 5.7 L6 11.4 Z" fill="#a3a3a3"/></svg>
<svg style="left:1857px;top:622.5px" width="7" height="12" viewBox="0 0 7 12"><path d="M0 0 L6 5.7 L0 11.4 Z" fill="#a3a3a3"/></svg>
<div class="a" style="left:361.15px;top:690.00px;font-size:15.40px;color:#8d8d8f;transform:scaleX(0.9465);transform-origin:0 0;letter-spacing:0.25px;">Showing 1 - 4 of 4 entries</div>
<div class="b" style="left:1503px;top:677px;width:153px;height:42px;border:1px solid #d6d6d6;border-radius:5px"></div>
<div class="a" style="left:1512.90px;top:689.00px;font-size:17.40px;color:#8a8a8a;transform:scaleX(1.0784);transform-origin:0 0;">25</div>
<svg style="left:1628px;top:692.5px" width="17" height="11" viewBox="0 0 17 11"><path d="M1 1.5 L8 8.5 L15 1.5" fill="none" stroke="#8a8a8a" stroke-width="2.2"/></svg>
<div class="a" style="left:1675.95px;top:690.00px;font-size:14.10px;color:#9a9a9a;">Records per page</div>
<div class="b" style="left:1789px;top:687px;width:21px;height:22px;background:#f1f1f3"></div>
<div class="b" style="left:1838px;top:687px;width:21px;height:22px;background:#f1f1f3"></div>
<svg style="left:1796px;top:693.5px" width="6" height="10" viewBox="0 0 6 10"><path d="M5.5 0 L0 4.8 L5.5 9.6 Z" fill="#c6c6c6"/></svg>
<svg style="left:1845px;top:693.5px" width="6" height="10" viewBox="0 0 6 10"><path d="M0 0 L5.5 4.8 L0 9.6 Z" fill="#c6c6c6"/></svg>
<div class="a" style="left:1820.75px;top:690.00px;font-size:14.10px;color:#2b3e9a;">1</div>
<div class="b" style="left:1813px;top:708px;width:22px;height:1.6px;background:#1f45a0"></div>
</body></html>
